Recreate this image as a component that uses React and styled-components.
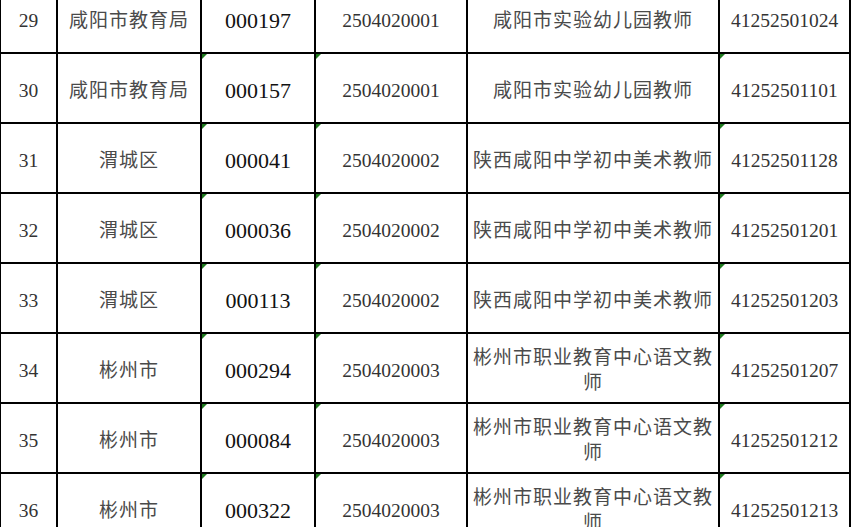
import React from 'react';
import styled, { createGlobalStyle } from 'styled-components';

const GlobalStyle = createGlobalStyle`
  html, body {
    margin: 0;
    padding: 0;
    background: #fff;
    overflow: hidden;
  }
`;

const Viewport = styled.div`
  width: 851px;
  height: 527px;
  overflow: hidden;
  background: #fff;
`;

const Sheet = styled.div`
  display: grid;
  grid-template-columns: 55px 142px 112px 150px 250px 129px;
  grid-auto-rows: 68px;
  gap: 2px;
  padding: 2px;
  background: #000;
  width: max-content;
  margin: -18px 0 0 -1px;
`;

const Cell = styled.div`
  position: relative;
  display: flex;
  align-items: center;
  justify-content: center;
  text-align: center;
  background: #fff;
  padding: 4px 4px 0;
  box-sizing: border-box;
  font-family: 'Liberation Serif', 'Noto Sans CJK SC', serif;
  font-size: ${(p) => (p.$code ? '22px' : p.$cjk ? '19px' : '19.5px')};
  letter-spacing: ${(p) => (p.$cjk ? '1px' : '0')};
  line-height: 25px;
  color: ${(p) => (p.$code ? '#111' : p.$cjk ? '#4a4a4a' : '#333')};

  ${(p) =>
    p.$flag &&
    `
    &::before {
      content: '';
      position: absolute;
      top: 0;
      left: 0;
      border-top: 5px solid #1f7a1f;
      border-right: 5px solid transparent;
    }
  `}
`;

const rows = [
  ['29', '咸阳市教育局', '000197', '2504020001', '咸阳市实验幼儿园教师', '41252501024'],
  ['30', '咸阳市教育局', '000157', '2504020001', '咸阳市实验幼儿园教师', '41252501101'],
  ['31', '渭城区', '000041', '2504020002', '陕西咸阳中学初中美术教师', '41252501128'],
  ['32', '渭城区', '000036', '2504020002', '陕西咸阳中学初中美术教师', '41252501201'],
  ['33', '渭城区', '000113', '2504020002', '陕西咸阳中学初中美术教师', '41252501203'],
  ['34', '彬州市', '000294', '2504020003', '彬州市职业教育中心语文教师', '41252501207'],
  ['35', '彬州市', '000084', '2504020003', '彬州市职业教育中心语文教师', '41252501212'],
  ['36', '彬州市', '000322', '2504020003', '彬州市职业教育中心语文教师', '41252501213'],
];

export default function App() {
  return (
    <Viewport>
      <GlobalStyle />
      <Sheet>
        {rows.map(([no, unit, code, post, name, ticket]) => (
          <React.Fragment key={no}>
            <Cell>{no}</Cell>
            <Cell $cjk>{unit}</Cell>
            <Cell $code $flag>{code}</Cell>
            <Cell $flag>{post}</Cell>
            <Cell $cjk>{name}</Cell>
            <Cell $flag>{ticket}</Cell>
          </React.Fragment>
        ))}
      </Sheet>
    </Viewport>
  );
}
